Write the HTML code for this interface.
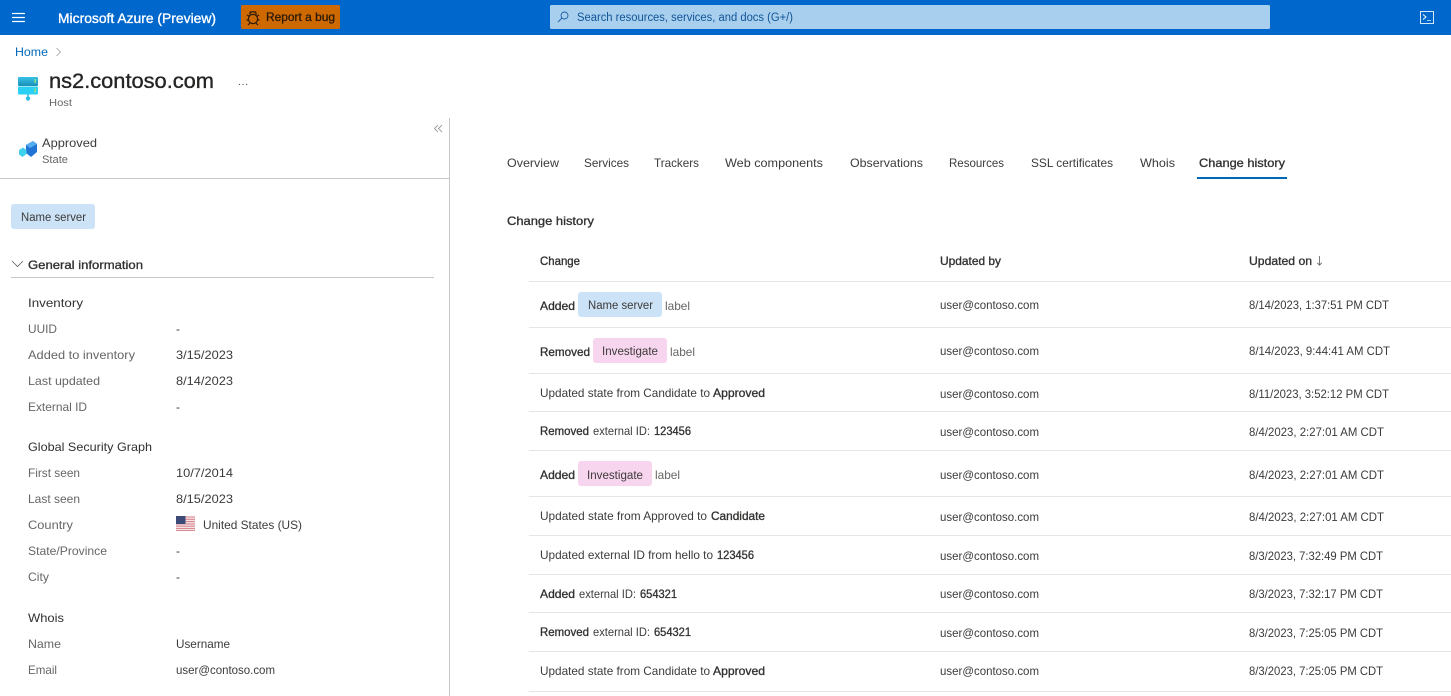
<!DOCTYPE html>
<html><head><meta charset="utf-8"><title>ns2.contoso.com</title>
<style>
html,body{margin:0;padding:0;background:#fff;width:1451px;height:696px;overflow:hidden}
svg{display:block}
text{font-family:"Liberation Sans",sans-serif;font-size:12px;fill:#3d3b3a;white-space:pre}
.g{fill:#686664}
.b{fill:#323130;stroke:#323130;stroke-width:.32px}
.d{fill:#323130}
.w{fill:#fff;stroke:#fff;stroke-width:.35px}
</style></head><body>
<svg width="1451" height="696" viewBox="0 0 1451 696" xmlns="http://www.w3.org/2000/svg">
<defs>
<linearGradient id="s1" x1="0" y1="0" x2="0" y2="1"><stop offset="0" stop-color="#37c2e8"/><stop offset="1" stop-color="#1a8fb8"/></linearGradient>
</defs>
<rect width="1451" height="35" fill="#0067cc"/>
<path d="M12 13.500h13M12 17.500h13M12 21.500h13" stroke="#fff" stroke-width="1.300" fill="none"/>
<text x="58" y="23" textLength="158" lengthAdjust="spacingAndGlyphs" class="w" style="font-size:14px">Microsoft Azure (Preview)</text>
<rect x="241" y="5" width="99" height="24" rx="1.500" fill="#cd6900"/>
<g fill="none" stroke="#2b1a05" stroke-width="1.200"><circle cx="253" cy="19" r="4.600"/><path d="M249.500 14.500a3.600 3.600 0 0 1 7 0M247 15l2.500 1.500M259 15l-2.500 1.500M246.500 20h2M259.500 20h-2M248 25l2-2M258 25l-2-2M250 11.500l1 1.500M256 11.500l-1 1.500"/></g>
<text x="266" y="21" textLength="69" lengthAdjust="spacingAndGlyphs" style="fill:#2b1a05;stroke:#2b1a05;stroke-width:.3px">Report a bug</text>
<rect x="550" y="5" width="720" height="24" rx="1.500" fill="#a9cfef"/>
<g fill="none" stroke="#1d5f9f" stroke-width="0.900"><circle cx="564.500" cy="15.500" r="3.500"/><path d="M562 18l-4 4"/></g>
<text x="577" y="21" textLength="216" lengthAdjust="spacingAndGlyphs" style="font-size:11.500px;fill:#0f5596">Search resources, services, and docs (G+/)</text>
<rect x="1420.500" y="11.500" width="13" height="12" fill="none" stroke="#d6e7f7" stroke-width="1"/>
<path d="M1423 14.500l3 2.500-3 2.500" fill="none" stroke="#fff" stroke-width="1"/><path d="M1427 20.500h4" stroke="#a9cfef" stroke-width="1"/>

<text x="15" y="56" textLength="33" lengthAdjust="spacingAndGlyphs" style="fill:#0067b8">Home</text>
<path d="M56.500 48l4 4-4 4" fill="none" stroke="#a19f9d" stroke-width="0.800"/>
<rect x="18" y="77" width="20" height="9" rx="1" fill="url(#s1)"/>
<rect x="18" y="86.500" width="20" height="8" rx="1" fill="#2bd0f5"/>
<rect x="34.500" y="79" width="1.500" height="4" fill="#8fe08a"/><rect x="34.500" y="88.500" width="1.500" height="4" fill="#8fe08a"/>
<rect x="27.300" y="94" width="1.400" height="4" fill="#2bb6dc"/><circle cx="28" cy="98.500" r="2.200" fill="#2bc0e4"/>
<text x="49" y="88" textLength="165" lengthAdjust="spacingAndGlyphs" style="font-size:21px;fill:#252423;stroke:#252423;stroke-width:.35px">ns2.contoso.com</text>
<text x="238" y="85" textLength="10" lengthAdjust="spacing" style="font-size:10px">...</text>
<text x="49" y="106" textLength="23" lengthAdjust="spacingAndGlyphs" class="g" style="font-size:10.500px">Host</text>

<path d="M438 125l-3.500 3.500 3.500 3.500M442 125l-3.500 3.500 3.500 3.500" fill="none" stroke="#8a8886" stroke-width="0.800"/>
<path d="M449.500 118V696" stroke="#c8c6c4" stroke-width="1"/>
<path d="M0 178.500H449" stroke="#c8c6c4" stroke-width="1"/>

<polygon points="26,145 33,141 37,144 37,152 31,157 26,153" fill="#1f74d4"/>
<polygon points="26,145 33,141 37,144 30,148" fill="#56aef0"/>
<polygon points="19,150 23,147.500 26.500,150 26.500,154 22.500,157 19,154.500" fill="#3fd0ee"/>
<text x="42" y="147" textLength="55" lengthAdjust="spacingAndGlyphs">Approved</text>
<text x="42" y="163" textLength="26" lengthAdjust="spacingAndGlyphs" class="g" style="font-size:11px">State</text>

<rect x="11" y="204" width="84" height="25" rx="3" fill="#cce2f6"/>
<text x="21" y="221" textLength="65" lengthAdjust="spacingAndGlyphs" style="font-size:11.500px">Name server</text>
<path d="M12 261l5.500 5.500 5.500-5.500" fill="none" stroke="#605e5c" stroke-width="0.800"/>
<text x="28" y="269" textLength="115" lengthAdjust="spacingAndGlyphs" class="b">General information</text>
<path d="M11 277.500H434" stroke="#c8c6c4" stroke-width="1"/>

<text x="28" y="307" textLength="55" lengthAdjust="spacingAndGlyphs" class="d">Inventory</text>
<text x="28" y="333" textLength="29" lengthAdjust="spacingAndGlyphs" class="g">UUID</text><text x="176" y="333">-</text>
<text x="28" y="359" textLength="107" lengthAdjust="spacingAndGlyphs" class="g">Added to inventory</text><text x="176" y="359" textLength="57" lengthAdjust="spacingAndGlyphs">3/15/2023</text>
<text x="28" y="385" textLength="72" lengthAdjust="spacingAndGlyphs" class="g">Last updated</text><text x="176" y="385" textLength="57" lengthAdjust="spacingAndGlyphs">8/14/2023</text>
<text x="28" y="411" textLength="59" lengthAdjust="spacingAndGlyphs" class="g">External ID</text><text x="176" y="411">-</text>

<text x="28" y="451" textLength="124" lengthAdjust="spacingAndGlyphs" class="d">Global Security Graph</text>
<text x="28" y="477" textLength="52" lengthAdjust="spacingAndGlyphs" class="g">First seen</text><text x="176" y="477" textLength="57" lengthAdjust="spacingAndGlyphs">10/7/2014</text>
<text x="28" y="503" textLength="52" lengthAdjust="spacingAndGlyphs" class="g">Last seen</text><text x="176" y="503" textLength="57" lengthAdjust="spacingAndGlyphs">8/15/2023</text>
<text x="28" y="529" textLength="45" lengthAdjust="spacingAndGlyphs" class="g">Country</text>
<rect x="176" y="516" width="19" height="15" fill="#f4e4e6"/>
<path d="M176 517h19M176 519.300h19M176 521.600h19M176 523.900h19M176 526.200h19M176 528.500h19M176 530.500h19" stroke="#d98a92" stroke-width="1.100"/>
<rect x="176" y="516" width="9.500" height="8" fill="#3d4a78"/>
<text x="203" y="529" textLength="99" lengthAdjust="spacingAndGlyphs">United States (US)</text>
<text x="28" y="555" textLength="79" lengthAdjust="spacingAndGlyphs" class="g">State/Province</text><text x="176" y="555">-</text>
<text x="28" y="581" textLength="21" lengthAdjust="spacingAndGlyphs" class="g">City</text><text x="176" y="581">-</text>

<text x="28" y="622" textLength="36" lengthAdjust="spacingAndGlyphs" class="d">Whois</text>
<text x="28" y="648" textLength="33" lengthAdjust="spacingAndGlyphs" class="g">Name</text><text x="176" y="648" textLength="54" lengthAdjust="spacingAndGlyphs">Username</text>
<text x="28" y="674" textLength="29" lengthAdjust="spacingAndGlyphs" class="g">Email</text><text x="176" y="674" textLength="99" lengthAdjust="spacingAndGlyphs">user@contoso.com</text>

<text x="507" y="167" textLength="52" lengthAdjust="spacingAndGlyphs">Overview</text>
<text x="584" y="167" textLength="45" lengthAdjust="spacingAndGlyphs">Services</text>
<text x="654" y="167" textLength="45" lengthAdjust="spacingAndGlyphs">Trackers</text>
<text x="725" y="167" textLength="98" lengthAdjust="spacingAndGlyphs">Web components</text>
<text x="850" y="167" textLength="73" lengthAdjust="spacingAndGlyphs">Observations</text>
<text x="949" y="167" textLength="55" lengthAdjust="spacingAndGlyphs">Resources</text>
<text x="1031" y="167" textLength="82" lengthAdjust="spacingAndGlyphs">SSL certificates</text>
<text x="1140" y="167" textLength="35" lengthAdjust="spacingAndGlyphs">Whois</text>
<text x="1199" y="167" textLength="86" lengthAdjust="spacingAndGlyphs" class="b">Change history</text>
<rect x="1197" y="177" width="90" height="2" fill="#0067b8"/>

<text x="507" y="225" textLength="87" lengthAdjust="spacingAndGlyphs" class="b">Change history</text>

<text x="540" y="265" textLength="40" lengthAdjust="spacingAndGlyphs" class="b">Change</text>
<text x="940" y="265" textLength="61" lengthAdjust="spacingAndGlyphs" class="b">Updated by</text>
<text x="1249" y="265" textLength="63" lengthAdjust="spacingAndGlyphs" class="b">Updated on</text>
<path d="M1319.500 256v9M1317.300 262.800l2.200 2.400 2.200-2.400" fill="none" stroke="#605e5c" stroke-width="0.800"/>

<g stroke="#e6e5e4" stroke-width="1">
<path d="M529 281.500H1451M529 327.500H1451M529 373.500H1451M529 411.500H1451M529 450.500H1451M529 496.500H1451M529 535.500H1451M529 574.500H1451M529 612.500H1451M529 651.500H1451M529 691.500H1451"/>
</g>

<text x="540" y="310" textLength="35" lengthAdjust="spacingAndGlyphs" class="b">Added</text>
<rect x="578" y="292" width="84" height="25" rx="3" fill="#cce2f6"/>
<text x="588" y="309" textLength="65" lengthAdjust="spacingAndGlyphs" style="font-size:11.500px">Name server</text>
<text x="665" y="310" textLength="25" lengthAdjust="spacingAndGlyphs" class="g">label</text>

<text x="540" y="356" textLength="50" lengthAdjust="spacingAndGlyphs" class="b">Removed</text>
<rect x="593" y="338" width="74" height="25" rx="3" fill="#f8d5ee"/>
<text x="602" y="355" textLength="56" lengthAdjust="spacingAndGlyphs" style="font-size:11.500px">Investigate</text>
<text x="670" y="356" textLength="25" lengthAdjust="spacingAndGlyphs" class="g">label</text>

<text x="540" y="397" textLength="170" lengthAdjust="spacingAndGlyphs">Updated state from Candidate to</text>
<text x="713" y="397" textLength="52" lengthAdjust="spacingAndGlyphs" class="b">Approved</text>

<text x="540" y="435" textLength="49" lengthAdjust="spacingAndGlyphs" class="b">Removed</text>
<text x="593" y="435" textLength="57" lengthAdjust="spacingAndGlyphs">external ID:</text>
<text x="654" y="435" textLength="37" lengthAdjust="spacingAndGlyphs" class="b">123456</text>

<text x="540" y="479" textLength="35" lengthAdjust="spacingAndGlyphs" class="b">Added</text>
<rect x="578" y="461" width="74" height="25" rx="3" fill="#f8d5ee"/>
<text x="587" y="479" textLength="56" lengthAdjust="spacingAndGlyphs" style="font-size:11.500px">Investigate</text>
<text x="655" y="479" textLength="25" lengthAdjust="spacingAndGlyphs" class="g">label</text>

<text x="540" y="520" textLength="167" lengthAdjust="spacingAndGlyphs">Updated state from Approved to</text>
<text x="711" y="520" textLength="54" lengthAdjust="spacingAndGlyphs" class="b">Candidate</text>

<text x="540" y="559" textLength="173" lengthAdjust="spacingAndGlyphs">Updated external ID from hello to</text>
<text x="717" y="559" textLength="37" lengthAdjust="spacingAndGlyphs" class="b">123456</text>

<text x="540" y="598" textLength="35" lengthAdjust="spacingAndGlyphs" class="b">Added</text>
<text x="579" y="598" textLength="57" lengthAdjust="spacingAndGlyphs">external ID:</text>
<text x="640" y="598" textLength="37" lengthAdjust="spacingAndGlyphs" class="b">654321</text>

<text x="540" y="636" textLength="49" lengthAdjust="spacingAndGlyphs" class="b">Removed</text>
<text x="593" y="636" textLength="57" lengthAdjust="spacingAndGlyphs">external ID:</text>
<text x="654" y="636" textLength="37" lengthAdjust="spacingAndGlyphs" class="b">654321</text>

<text x="540" y="675" textLength="170" lengthAdjust="spacingAndGlyphs">Updated state from Candidate to</text>
<text x="713" y="675" textLength="52" lengthAdjust="spacingAndGlyphs" class="b">Approved</text>

<text x="940" y="309" textLength="99" lengthAdjust="spacingAndGlyphs">user@contoso.com</text>
<text x="940" y="355" textLength="99" lengthAdjust="spacingAndGlyphs">user@contoso.com</text>
<text x="940" y="398" textLength="99" lengthAdjust="spacingAndGlyphs">user@contoso.com</text>
<text x="940" y="436" textLength="99" lengthAdjust="spacingAndGlyphs">user@contoso.com</text>
<text x="940" y="479" textLength="99" lengthAdjust="spacingAndGlyphs">user@contoso.com</text>
<text x="940" y="521" textLength="99" lengthAdjust="spacingAndGlyphs">user@contoso.com</text>
<text x="940" y="560" textLength="99" lengthAdjust="spacingAndGlyphs">user@contoso.com</text>
<text x="940" y="598" textLength="99" lengthAdjust="spacingAndGlyphs">user@contoso.com</text>
<text x="940" y="637" textLength="99" lengthAdjust="spacingAndGlyphs">user@contoso.com</text>
<text x="940" y="675" textLength="99" lengthAdjust="spacingAndGlyphs">user@contoso.com</text>

<text x="1249" y="309" textLength="140" lengthAdjust="spacingAndGlyphs">8/14/2023, 1:37:51 PM CDT</text>
<text x="1249" y="355" textLength="141" lengthAdjust="spacingAndGlyphs">8/14/2023, 9:44:41 AM CDT</text>
<text x="1249" y="398" textLength="140" lengthAdjust="spacingAndGlyphs">8/11/2023, 3:52:12 PM CDT</text>
<text x="1249" y="436" textLength="135" lengthAdjust="spacingAndGlyphs">8/4/2023, 2:27:01 AM CDT</text>
<text x="1249" y="479" textLength="135" lengthAdjust="spacingAndGlyphs">8/4/2023, 2:27:01 AM CDT</text>
<text x="1249" y="521" textLength="135" lengthAdjust="spacingAndGlyphs">8/4/2023, 2:27:01 AM CDT</text>
<text x="1249" y="560" textLength="134" lengthAdjust="spacingAndGlyphs">8/3/2023, 7:32:49 PM CDT</text>
<text x="1249" y="598" textLength="134" lengthAdjust="spacingAndGlyphs">8/3/2023, 7:32:17 PM CDT</text>
<text x="1249" y="637" textLength="134" lengthAdjust="spacingAndGlyphs">8/3/2023, 7:25:05 PM CDT</text>
<text x="1249" y="675" textLength="134" lengthAdjust="spacingAndGlyphs">8/3/2023, 7:25:05 PM CDT</text>
</svg>
</body></html>
